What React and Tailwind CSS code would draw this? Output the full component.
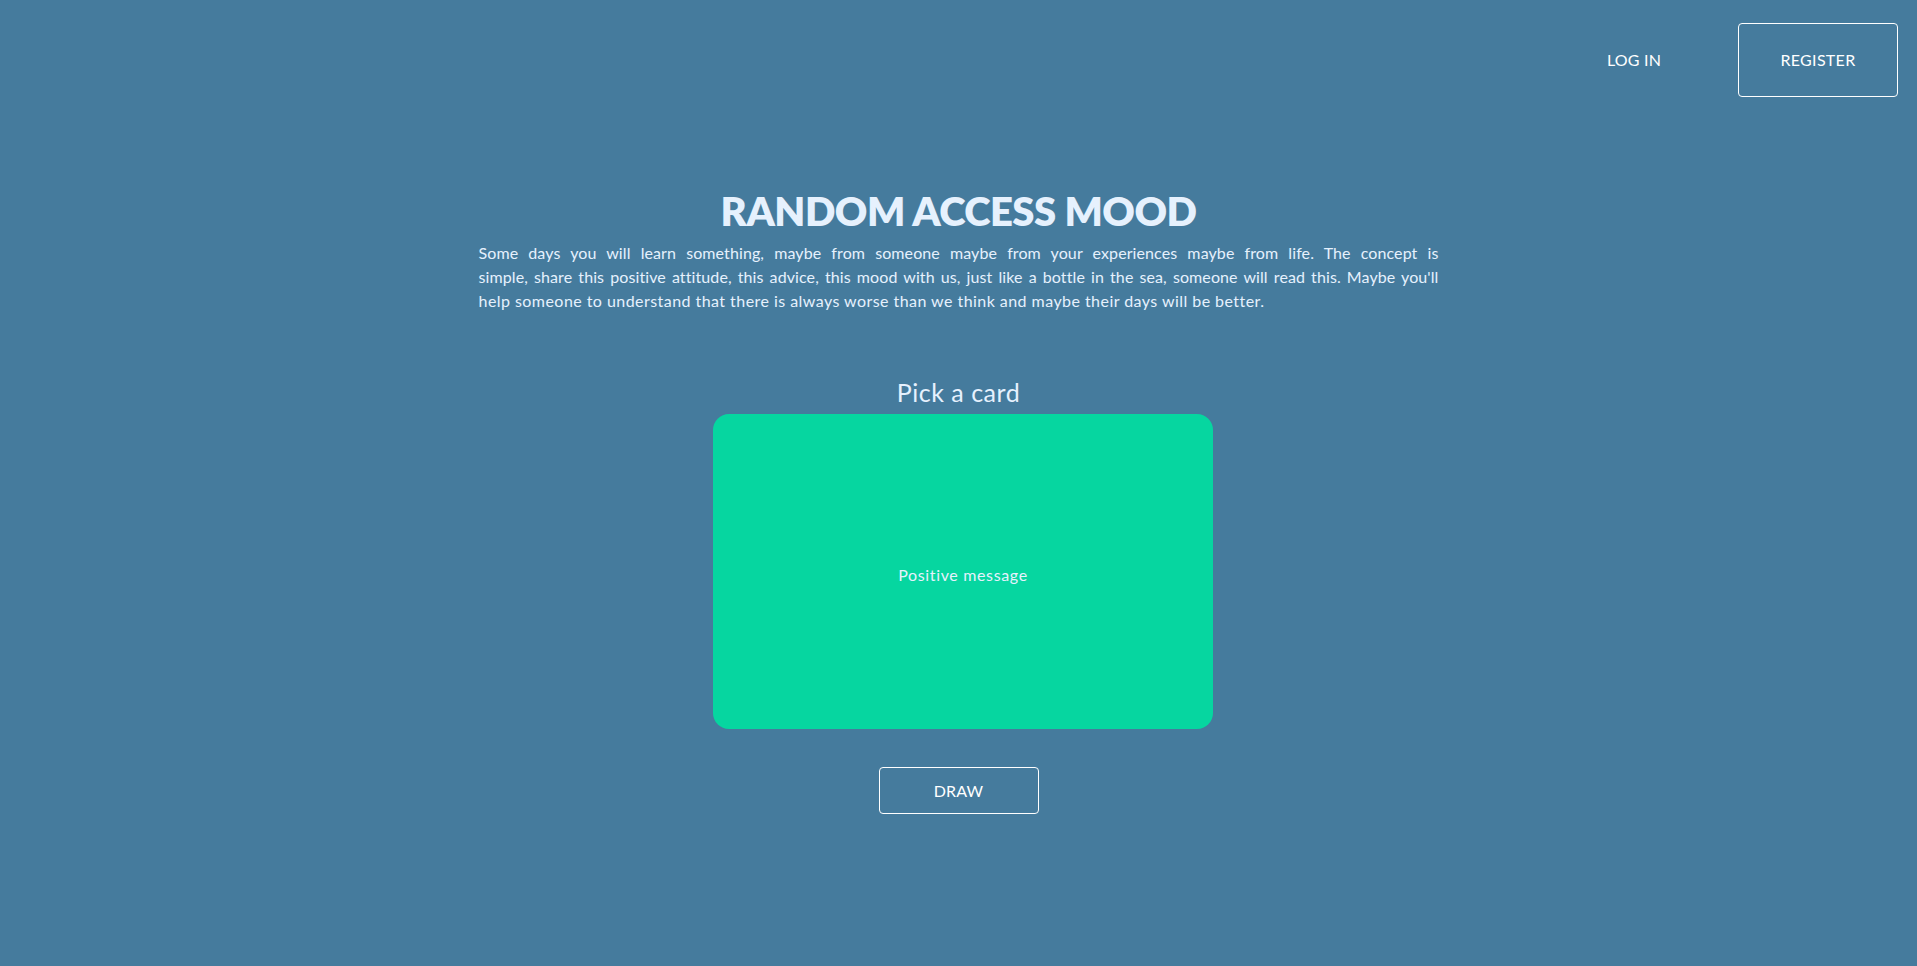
import React from 'react';

// Lines of the intro, broken where the original layout breaks them
const introLines = [
    "Some days you will learn something, maybe from someone maybe from your experiences maybe from life. The concept is",
    "simple, share this positive attitude, this advice, this mood with us, just like a bottle in the sea, someone will read this. Maybe you'll",
    "help someone to understand that there is always worse than we think and maybe their days will be better.",
];

const App = () => {
    return (
        <div className="min-h-[966px] w-full bg-[#457b9d] text-[#e6f1fd] font-['Lato','Open_Sans',sans-serif]">
            {/* Top navigation */}
            <header className="flex items-center justify-end gap-6 pt-[23px] pr-[19px]">
                <button className="h-[74px] w-[160px] text-[16px] tracking-[0.2px] text-white">LOG IN</button>
                <button className="h-[74px] w-[160px] rounded-[4px] border border-white text-[16px] tracking-[0.3px] text-white">
                    REGISTER
                </button>
            </header>

            <main className="flex flex-col items-center">
                <h1 className="mt-[90px] text-[40px] font-extrabold leading-[48px] tracking-[-0.5px]">RANDOM ACCESS MOOD</h1>
                <div className="mt-[6px] w-[960px] text-[16px] leading-[24px]">
                    {introLines.map((line, i) =>
                        i < introLines.length - 1 ? (
                            <p key={i} className="text-justify [text-align-last:justify] tracking-[0.1px]">
                                {line}
                            </p>
                        ) : (
                            <p key={i} className="tracking-[0.45px]">
                                {line}
                            </p>
                        )
                    )}
                </div>

                <h2 className="mt-[64px] text-[25px] leading-[30px] tracking-[0.5px]">Pick a card</h2>
                <div className="mt-[7px] ml-[9px] flex h-[315px] w-[500px] items-center justify-center rounded-2xl bg-[#06d6a0]">
                    <span className="pt-[6px] text-[16px] tracking-[0.65px]">Positive message</span>
                </div>

                <button className="mt-[38px] h-[47px] w-[160px] rounded-[4px] border border-white text-[16px] tracking-[0.2px] text-white">
                    DRAW
                </button>
            </main>
        </div>
    );
};

export default App;
